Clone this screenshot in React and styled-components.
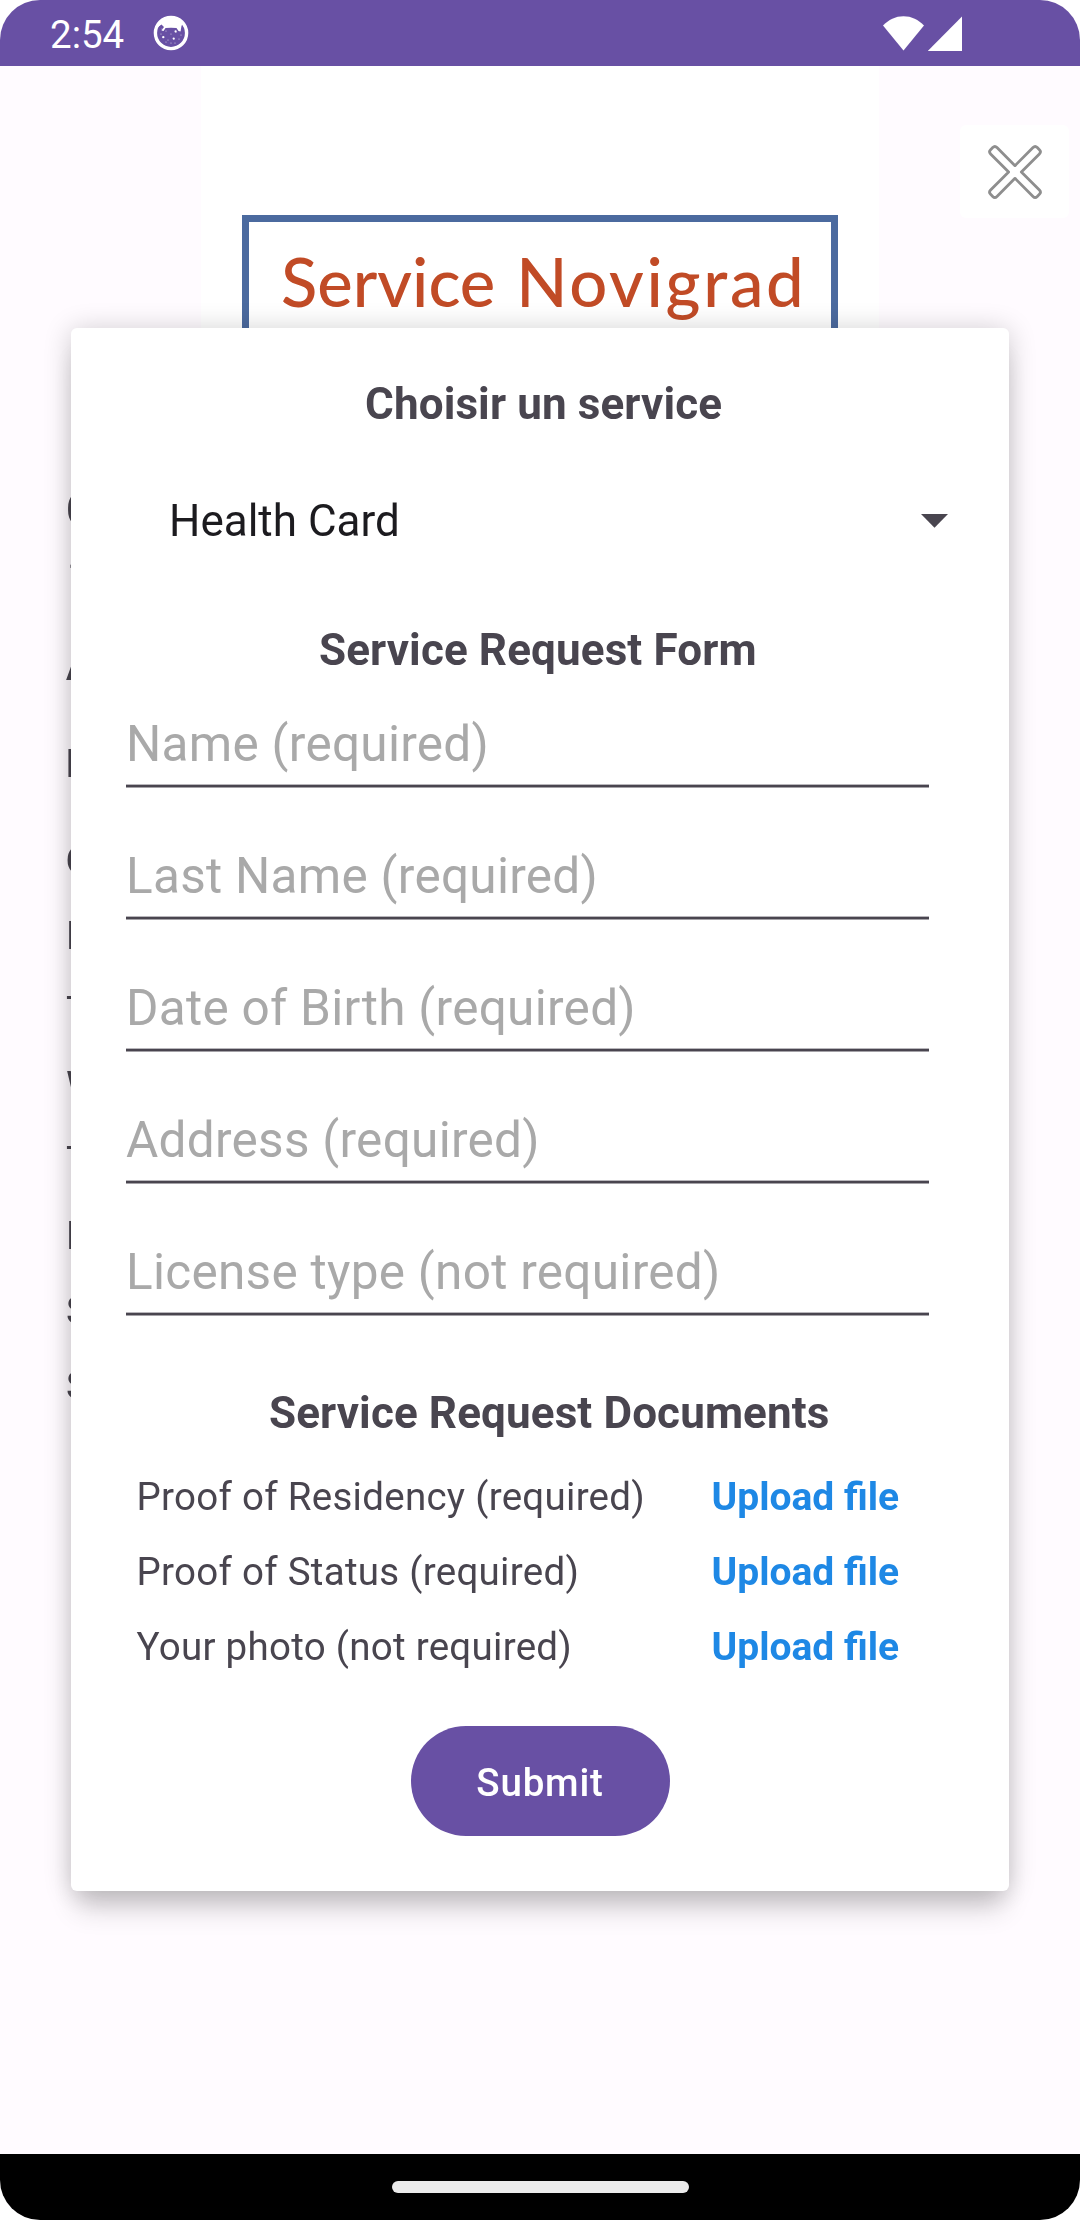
import React from 'react';
import styled, { createGlobalStyle } from 'styled-components';

const GlobalStyle = createGlobalStyle`
  * { box-sizing: border-box; }
  body { margin: 0; background: #fff; font-family: Roboto, "Liberation Sans", sans-serif; }
`;

const Screen = styled.div`
  width: 1080px;
  height: 2220px;
  display: flex;
  flex-direction: column;
  overflow: hidden;
  border-radius: 40px;
  background: #fffbff;
`;

const StatusBar = styled.header`
  flex: none;
  height: 66px;
  display: flex;
  align-items: center;
  padding: 0 118px 0 50px;
  background: #6850a4;
  color: #fff;
`;

const Clock = styled.span`
  font-size: 38.5px;
  line-height: 46px;
  padding-top: 3px;
`;

const NoticeIcon = styled.svg`
  width: 36px;
  height: 36px;
  margin-left: 29px;
`;

const Signals = styled.div`
  display: flex;
  align-items: flex-end;
  gap: 4px;
  height: 35px;
  margin-left: auto;
`;

const Main = styled.main`
  flex: 1;
  display: grid;
  grid-template-columns: 1080px;
  grid-template-rows: 2088px;
`;

const Backdrop = styled.section`
  grid-area: 1 / 1;
`;

const Banner = styled.div`
  display: grid;
  grid-template-columns: 201px 678px 1fr;
  height: 415px;
`;

const Logo = styled.div`
  grid-column: 2;
  height: 390px;
  padding: 148.5px 41px 0;
  background: #fff;
`;

const LogoFrame = styled.div`
  height: 190px;
  border: 7px solid #4b6a9f;
  padding: 19px 0 0 32px;
  color: #c14b26;
  font-family: Lato, "Open Sans", sans-serif;
  font-weight: 500;
  font-size: 67px;
  line-height: 80px;
  white-space: nowrap;
  word-spacing: 4px;
`;

const Word = styled.span`
  letter-spacing: ${(p) => p.$tracking}px;
`;

const CloseButton = styled.button`
  grid-column: 3;
  width: 109px;
  height: 93px;
  margin: 59px 0 0 81px;
  padding: 0;
  border: 0;
  border-radius: 6px;
  background: #fff;
  display: flex;
  align-items: center;
  justify-content: center;
`;

const ServiceList = styled.div`
  display: flex;
  flex-direction: column;
  padding-left: 66px;
  color: #49454f;
  will-change: transform;
`;

const Line = styled.div`
  margin-top: ${(p) => p.$gap ?? 30}px;
  padding-left: ${(p) => p.$indent ?? 0}px;
  font-size: ${(p) => (p.$large ? 49.5 : 38.5)}px;
  line-height: ${(p) => (p.$large ? 58 : 45)}px;
  font-weight: ${(p) => (p.$bold ? 700 : 400)};
`;

const Card = styled.form`
  grid-area: 1 / 1;
  z-index: 1;
  width: 938px;
  height: 1563px;
  margin: 262px 0 0 71px;
  padding-top: 50px;
  display: flex;
  flex-direction: column;
  border-radius: 6px;
  background: #fff;
  color: #49454f;
  box-shadow: 0 2px 28px rgba(0, 0, 0, 0.2), 0 24px 26px -6px rgba(0, 0, 0, 0.16);
`;

const Heading = styled.h2`
  margin: ${(p) => p.$top}px 0 0 ${(p) => p.$left}px;
  font-size: 44px;
  line-height: 52px;
  font-weight: 700;
  letter-spacing: 0.12px;
  white-space: nowrap;
`;

const Picker = styled.div`
  margin-top: 65px;
  padding: 0 61px 0 98px;
  display: flex;
  align-items: center;
  justify-content: space-between;
  font-size: 44px;
  line-height: 52px;
  color: #1c1b1f;
`;

const Fields = styled.div`
  margin: 38px 80px 0 55px;
  display: flex;
  flex-direction: column;
  gap: 58px;
`;

const Field = styled.label`
  display: block;
  height: 74px;
  font-size: 49.5px;
  line-height: 60px;
  letter-spacing: 0.28px;
  color: #a9a9a9;
  background: linear-gradient(#b9b7bc 1px, #49454f 1px, #49454f 3px, #a4a2a7 3px) 0 70px / 100% 4px no-repeat;
`;

const Documents = styled.div`
  margin: 35px 0 0 65.5px;
  display: flex;
  flex-direction: column;
  gap: 29px;
`;

const DocumentRow = styled.div`
  display: grid;
  grid-template-columns: 575px 1fr;
  font-size: 38.5px;
  line-height: 46px;
`;

const DocumentName = styled.span`
  letter-spacing: 0.28px;
`;

const UploadLink = styled.a`
  font-size: 39px;
  font-weight: 700;
  color: #1e88e5;
`;

const Submit = styled.button`
  align-self: center;
  width: 259px;
  height: 110px;
  margin-top: 56px;
  padding: 3px 0 0;
  border: 0;
  border-radius: 55px;
  background: #6850a4;
  color: #fff;
  font: 500 38.5px Roboto, sans-serif;
  letter-spacing: 0.8px;
`;

const NavBar = styled.footer`
  flex: none;
  height: 66px;
  display: flex;
  align-items: center;
  justify-content: center;
  background: #000;
`;

const Handle = styled.div`
  width: 297px;
  height: 12px;
  border-radius: 6px;
  background: #ebebeb;
`;

const fields = [
  'Name (required)',
  'Last Name (required)',
  'Date of Birth (required)',
  'Address (required)',
  'License type (not required)',
];

const documents = ['Proof of Residency (required)', 'Proof of Status (required)', 'Your photo (not required)'];

const specks = [
  [9, 14], [13, 16], [23, 17], [27, 15], [8, 19], [18, 19], [28, 20], [11, 22], [15, 25],
  [21, 24], [26, 24], [18, 28], [22, 28], [13, 27],
];

function DebugCat() {
  return (
    <NoticeIcon viewBox="0 0 36 36" fill="#fff">
      <circle cx="18" cy="18" r="15.6" fill="none" stroke="#fff" strokeWidth="3.4" />
      <path d="M6 8 L10 4 L18 1 L26 4 L30 8 L28.5 11 L27.5 16.5 L25.5 16 L23.5 13 Q18 12.6 12.500 13 L10.5 16 L8.5 15.5 L11 12 L8.5 9.5 L5 12 Z" />
      <circle cx="22.6" cy="16.4" r="1.1" />
      <circle cx="10.2" cy="22.2" r="1.1" />
      <circle cx="20.7" cy="23.6" r="1.1" />
      {specks.map(([x, y]) => (
        <circle key={`${x}-${y}`} cx={x} cy={y} r="0.6" opacity="0.7" />
      ))}
    </NoticeIcon>
  );
}

export default function App() {
  return (
    <>
      <GlobalStyle />
      <Screen>
        <StatusBar>
          <Clock>2:54</Clock>
          <DebugCat />
          <Signals>
            <svg width="41" height="35" viewBox="0 0 41 35" fill="#fff">
              <path d="M0 9.6 C5.5 3.6 12.5 0.2 20.5 0.2 C28.5 0.2 35.5 3.6 41 9.6 L20.5 34.5 Z" />
            </svg>
            <svg width="34" height="35" viewBox="0 0 34 35" fill="#fff">
              <path d="M34 0.5 V35 H-0.2 Z" />
            </svg>
          </Signals>
        </StatusBar>
        <Main>
          <Backdrop>
            <Banner>
              <Logo>
                <LogoFrame>
                  <Word $tracking={0}>Service</Word> <Word $tracking={2.7}>Novigrad</Word>
                </LogoFrame>
              </Logo>
              <CloseButton aria-label="Close">
                <svg width="58" height="58" viewBox="-29 -29 58 58" fill="none" stroke="#8e8e8e" strokeWidth="2.8" strokeLinejoin="round">
                  <path
                    transform="rotate(45)"
                    d="M-4.500 -30 Q-4.500 -33 -1.500 -33 H1.500 Q4.500 -33 4.500 -30 V-4.500 H30 Q33 -4.500 33 -1.500 V1.500 Q33 4.500 30 4.500 H4.500 V30 Q4.500 33 1.500 33 H-1.500 Q-4.500 33 -4.500 30 V4.500 H-30 Q-33 4.500 -33 1.500 V-1.500 Q-33 -4.500 -30 -4.500 H-4.500 Z"
                  />
                </svg>
              </CloseButton>
            </Banner>
            <ServiceList>
              <Line $large $bold $gap={0}>C</Line>
              <Line $gap={14} $indent={1.2}>1</Line>
              <Line $gap={46} $bold>A</Line>
              <Line $gap={52} $bold>E</Line>
              <Line $gap={52} $bold>O</Line>
              <Line>E</Line>
              <Line>T</Line>
              <Line>W</Line>
              <Line>T</Line>
              <Line>F</Line>
              <Line>S</Line>
              <Line>S</Line>
            </ServiceList>
          </Backdrop>
          <Card>
            <Heading $top={0} $left={294}>Choisir un service</Heading>
            <Picker>
              Health Card
              <svg width="27" height="14" viewBox="0 0 27 14" fill="#49454f">
                <path d="M0 0 H27 L13.5 13.7 Z" />
              </svg>
            </Picker>
            <Heading $top={77} $left={248}>Service Request Form</Heading>
            <Fields>
              {fields.map((name) => (
                <Field key={name}>{name}</Field>
              ))}
            </Fields>
            <Heading $top={71} $left={198}>Service Request Documents</Heading>
            <Documents>
              {documents.map((name) => (
                <DocumentRow key={name}>
                  <DocumentName>{name}</DocumentName>
                  <UploadLink>Upload file</UploadLink>
                </DocumentRow>
              ))}
            </Documents>
            <Submit type="button">Submit</Submit>
          </Card>
        </Main>
        <NavBar>
          <Handle />
        </NavBar>
      </Screen>
    </>
  );
}
